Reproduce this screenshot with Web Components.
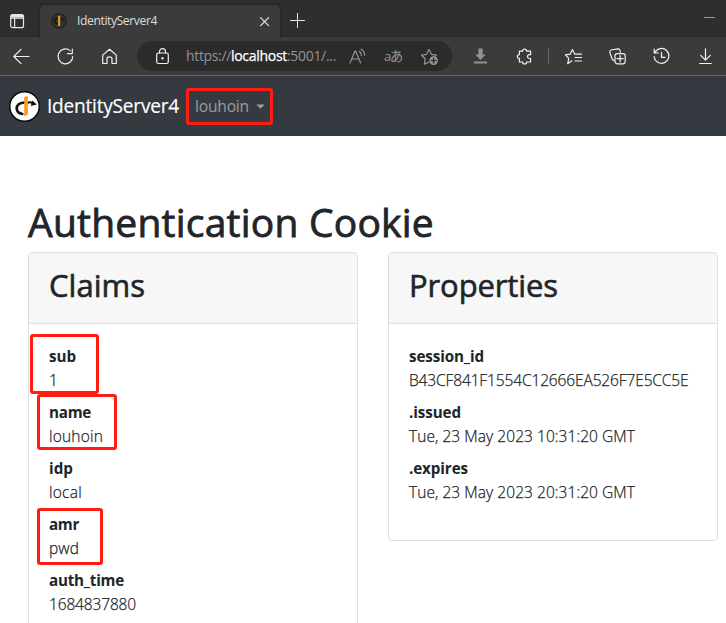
<!DOCTYPE html>
<html lang="en"><head><meta charset="utf-8"><title>IdentityServer4</title>
<style>
html,body{margin:0;height:100%;overflow:hidden}
body{background:#fff;color:#212529;font-family:"Open Sans","Noto Sans","Noto Sans CJK JP",sans-serif}
</style></head><body>
<app-page></app-page>
<script>
const make=(name,html,ready)=>customElements.define(name,class extends HTMLElement{
  constructor(){super();this.attachShadow({mode:'open'}).innerHTML=html;}
  connectedCallback(){if(ready)ready.call(this,this.shadowRoot);}
});

/* Text run whose tracking is adjusted to span the "w" attribute, in pixels. */
make('fit-text','<style>:host{display:inline-block;white-space:pre}</style><slot></slot>',function(){
  const n=this.textContent.length,w=+this.getAttribute('w');
  this.style.letterSpacing='0px';
  const now=this.getBoundingClientRect().width;
  if(w&&n>1)this.style.letterSpacing=((w-now)/n).toFixed(3)+'px';
});

const icons={
 tabs:'<rect x="3.7" y="3.7" width="12.8" height="13" rx="2"/><path d="M4 7.2h12.6M7.6 7v9.4" /><path d="M5 5.2h10.4" stroke-width="2.8"/>',
 back:'<path d="M18 10.5H3M10 3.3L2.8 10.5L10 17.7"/>',
 reload:'<path d="M17.8 10.5A7.4 7.4 0 1 1 15 4.6M17.3 3v4.6h-4.8"/>',
 home:'<path d="M3.7 9.1L10.5 3.3L17.3 9.1V17.5H13V12.8Q13 10.8 10.5 10.8T8 12.8V17.5H3.7Z"/>',
 lock:'<rect x="4.7" y="7" width="11.6" height="10.5" rx="1.8"/><path d="M7.5 7V5.6a3 3 0 0 1 6 0V7"/><circle cx="10.5" cy="12.2" r=".6" fill="currentColor"/>',
 read:'<path d="M3 17L8 5h.6L13.6 17M4.8 13h7M12.3 5.2q2 1.3 2 4M14.2 3.2q3.4 2 3.4 6"/>',
 favadd:'<path d="M10 16L5.4 18.2L6.2 12.8L2.5 9.2L7.6 8.3L10 3.6L12.4 8.3L17.4 9.1L16 10.6"/><circle cx="14.6" cy="14.6" r="4.3" fill="currentColor" stroke="none"/><path d="M14.6 12.2v4.8M12.2 14.6h4.8" stroke="#2b2b2b" stroke-width="1.3"/>',
 get:'<path d="M8.4 2.5h4.2v6h3.1L10.5 14 5.3 8.5h3.1zM4 15.6h13v1.8H4z" fill="currentColor" stroke="none"/>',
 puzzle:'<path d="M5.4 5.2H8.6A2 2 0 0 1 12.6 5.2H16.6V8.7H15.4A1.8 1.8 0 0 0 15.4 12.5H16.6V16H12.6A2 2 0 0 1 8.6 16H5.4V12.6A2 2 0 0 1 5.4 8.6Z"/>',
 favs:'<path d="M8.9 14.8L4.7 17.7L5.8 12.4L2.4 8.8L7.2 8.2L9.4 3.5L11.7 8.1H18.5M12 11.5h6.5M12 15h6.5"/>',
 collect:'<path d="M7.2 14.7L5.3 13.5L2.8 6.3Q2.4 4.6 4 4L11 2.8Q12.8 2.8 13.1 4.5L13.3 6.2"/><rect x="8" y="7.6" width="10.2" height="10.2" rx="2.2"/><path d="M13.1 9.6v6.2M10 12.7h6.2"/>',
 history:'<path d="M3.8 6.7A7.4 7.4 0 1 1 3.1 10.5M3.2 3v4h4.3M10.5 6.3v5h3.5"/>',
 down:'<path d="M10.5 2.8v11M5.7 9.4l4.8 4.8 4.8-4.8M4.6 17.5h11.8"/>',
 close:'<path d="M6.6 6.6l8 8M14.6 6.6l-8 8"/>',
 plus:'<path d="M10.5 3.5v14M3.5 10.5h14" stroke-width="1"/>',
 min:'<path d="M5.5 10.5h10" stroke-width="1"/>',
 caret:'<path d="M6.3 8.5h8.4l-4.2 4.2z" fill="currentColor" stroke="none"/>',
 brand:'<circle cx="10.5" cy="10.5" r="10" fill="#fff" stroke="#080808" stroke-width="1"/><path d="M10.4 7.8Q5.2 8.4 5.2 11.8Q5.4 15 9 15.6" fill="none" stroke="#111" stroke-width="1.8"/><path d="M12 8.4Q14 6.9 16.2 8.2" fill="none" stroke="#111" stroke-width="1.3"/><path d="M15.8 6.5L18.8 9.1 14.8 10.1z" fill="#111" stroke="none"/><path d="M10.3 4.1L12.8 3.4V15.8L10.3 17.2z" fill="#ff981c" stroke="none"/>',
 favicon:'<circle cx="10.5" cy="10.5" r="9.5" fill="#323232" stroke="#202020" stroke-width="1.6"/><path d="M8.5 7Q4.5 8 5 11T8.5 14M13 7.5Q16 7 17 10" stroke="#171717" stroke-width="2"/><path d="M9.3 4.1L12 3.3V16.5L9.3 17.6z" fill="#e69a22" stroke="none"/>'
};
make('ui-icon','<style>:host{display:block;flex:none;width:21px;height:21px}svg{display:block;width:100%;height:100%;overflow:visible}</style><svg viewBox="0 0 21 21" fill="none" stroke="currentColor" stroke-width="1.2" stroke-linejoin="round" stroke-linecap="round"></svg>',function(r){
  r.querySelector('svg').innerHTML=icons[this.getAttribute('name')];
});

make('browser-tabs',`<style>
:host{display:flex;height:37px;background:#2e2e2e;color:#e6e6e6;box-sizing:border-box;box-shadow:inset 0 -1px #292929}
.menu{margin:11px 0 0 7px}
.tab{display:flex;align-items:center;width:240px;height:32px;margin:5px 0 0 12px;background:#3b3b3b;border-radius:5px 5px 0 0;box-shadow:0 0 3px #1d1d1d;box-sizing:border-box;clip-path:inset(-4px -4px 0 -4px)}
.fav{width:16px;height:16px;margin-left:11px}
fit-text{margin-left:10px;font-size:12.2px;line-height:16px;color:#ddd}
.x{margin-left:auto;margin-right:5px}
.plus{margin:10px 0 0 7px}.min{margin:7px 6px 0 auto;color:#999}
</style><ui-icon class="menu" name="tabs"></ui-icon>
<div class="tab"><ui-icon class="fav" name="favicon"></ui-icon><fit-text w="80">IdentityServer4</fit-text><ui-icon class="x" name="close"></ui-icon></div>
<ui-icon class="plus" name="plus"></ui-icon><ui-icon class="min" name="min"></ui-icon>`);

make('browser-toolbar',`<style>
:host{display:flex;align-items:center;height:39px;background:#3b3b3b;color:#f0f0f0;border-bottom:1px solid #686868;box-sizing:border-box;padding-left:10.5px}
ui-icon+ui-icon{margin-left:23px}
.addr{display:flex;align-items:center;width:315px;height:30px;margin-left:17.5px;border-radius:15px;background:#2b2b2b;box-sizing:border-box;padding-left:15px;color:#959595}
.addr .lock{color:#f0f0f0}
.url{display:flex;margin-left:13px;font-size:14px;line-height:20px;width:152px;color:#939393}
.url .host{color:#fff;-webkit-text-stroke:.25px #fff}
.read{margin-left:9px}.tr{font-size:13.2px;line-height:20px;margin-left:16px}
.addr .fa{margin-left:17px}
.get{margin-left:17.5px;color:#929292}
.sep{width:1px;height:16px;background:#666;margin:0 14px 0 13.5px}
</style>
<ui-icon name="back"></ui-icon><ui-icon name="reload"></ui-icon><ui-icon name="home"></ui-icon>
<div class="addr"><ui-icon class="lock" name="lock"></ui-icon>
<div class="url"><fit-text w="45">https://</fit-text><fit-text class="host" w="56">localhost</fit-text><fit-text w="49">:5001/...</fit-text></div>
<ui-icon class="read" name="read"></ui-icon><fit-text class="tr" w="18">aあ</fit-text><ui-icon class="fa" name="favadd"></ui-icon></div>
<ui-icon class="get" name="get"></ui-icon><ui-icon name="puzzle"></ui-icon><span class="sep"></span>
<ui-icon name="favs"></ui-icon><ui-icon name="collect"></ui-icon><ui-icon name="history"></ui-icon><ui-icon name="down"></ui-icon>`);

make('site-nav',`<style>
:host{display:flex;align-items:center;height:60px;background:#343a40;box-sizing:border-box;padding-left:9px}
.logo{width:31px;height:31px}
.name{font-size:19.1px;line-height:30px;color:#fff;margin-left:7px;margin-bottom:1px;-webkit-text-stroke:.15px #fff}
.user{display:flex;align-items:center;width:87px;height:37px;margin-left:7px;border:3px solid #ff1d12;border-radius:3px;box-sizing:border-box;color:#9a9da0;padding-left:6px}
.user fit-text{font-size:15.6px;line-height:24px}.user ui-icon{margin-left:1px}
</style><ui-icon class="logo" name="brand"></ui-icon><fit-text class="name" w="132">IdentityServer4</fit-text>
<div class="user"><fit-text w="54">louhoin</fit-text><ui-icon name="caret"></ui-icon></div>`);

make('info-card',`<style>
:host{display:block;width:330px;border:1px solid #dfdfdf;border-radius:4px;box-sizing:border-box;background:#fff}
header{height:71px;box-sizing:border-box;background:#f7f7f7;border-bottom:1px solid #dfdfdf;border-radius:3px 3px 0 0;padding:13px 20px 0;font-size:31px;line-height:38px;-webkit-text-stroke:.6px currentColor}
.body{padding:20px 20px 28px}
</style><header><slot name="title"></slot></header><div class="body"><slot></slot></div>`);

make('claim-row',`<style>
:host{display:block;position:relative;font-size:15.2px;line-height:24px;height:48px}
.k{font-weight:700}.v{font-weight:300;font-size:15.5px;-webkit-text-stroke:.25px currentColor}.k,.v{height:24px}
.mark{position:absolute;box-sizing:border-box;border:3px solid #ff1d12;border-radius:3px}
</style><div class="k"><slot name="key"></slot></div><div class="v"><slot></slot></div>`,function(r){
  const m=this.getAttribute('mark');if(!m)return;
  const [l,t,w,h]=m.split(' '),d=document.createElement('div');
  d.className='mark';d.style.cssText=`left:${l}px;top:${t}px;width:${w}px;height:${h}px`;r.append(d);
});

make('app-page',`<style>
:host{display:block;height:623px;overflow:hidden}
main{padding:62px 8px 0 28px}
h1{margin:0 0 6px;font-size:39px;line-height:48px;font-weight:400;height:48px;-webkit-text-stroke:.8px currentColor}
.cards{display:grid;grid-template-columns:330px 330px;gap:30px;align-items:start}
claim-row:not(:last-child){margin-bottom:8px}
.claims{height:420px}.props{height:289px}
</style><browser-tabs></browser-tabs><browser-toolbar></browser-toolbar><site-nav></site-nav>
<main><h1><fit-text w="406">Authentication Cookie</fit-text></h1><div class="cards">
<info-card class="claims"><fit-text slot="title" w="96">Claims</fit-text>
<claim-row mark="-19 -10 69 60"><fit-text slot="key" w="27">sub</fit-text><fit-text w="9">1</fit-text></claim-row>
<claim-row mark="-12 -6 80 56"><fit-text slot="key" w="42">name</fit-text><fit-text w="54">louhoin</fit-text></claim-row>
<claim-row><fit-text slot="key" w="24">idp</fit-text><fit-text w="33">local</fit-text></claim-row>
<claim-row mark="-12 -4 66 57"><fit-text slot="key" w="30">amr</fit-text><fit-text w="30">pwd</fit-text></claim-row>
<claim-row><fit-text slot="key" w="75">auth_time</fit-text><fit-text w="87">1684837880</fit-text></claim-row>
</info-card>
<info-card class="props"><fit-text slot="title" w="149">Properties</fit-text>
<claim-row><fit-text slot="key" w="75">session_id</fit-text><fit-text w="279.5">B43CF841F1554C12666EA526F7E5CC5E</fit-text></claim-row>
<claim-row><fit-text slot="key" w="52">.issued</fit-text><fit-text w="226">Tue, 23 May 2023 10:31:20 GMT</fit-text></claim-row>
<claim-row><fit-text slot="key" w="59">.expires</fit-text><fit-text w="226">Tue, 23 May 2023 20:31:20 GMT</fit-text></claim-row>
</info-card></div></main>`);
</script></body></html>
